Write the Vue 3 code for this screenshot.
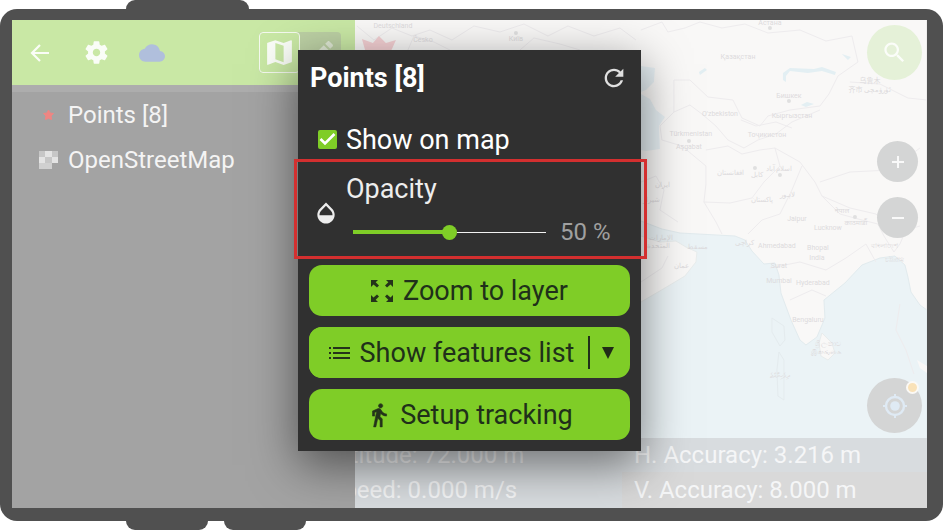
<script setup>
import { ref } from 'vue'

const visible = ref(true)
const opacity = ref(50)
const mode = ref('map')

const layers = [
  { name: 'Points [8]', kind: 'point' },
  { name: 'OpenStreetMap', kind: 'raster' },
]

const readings = [
  { id: 'altitude', text: 'Altitude: 72.000 m' },
  { id: 'h-accuracy', text: 'H. Accuracy: 3.216 m' },
  { id: 'speed', text: 'Speed: 0.000 m/s' },
  { id: 'v-accuracy', text: 'V. Accuracy: 8.000 m' },
]

const borders = [
  'M641 30 662 22 668 32 685 28 700 22 722 28 745 24 768 33 800 30 826 41 852 36 858 62 838 76 829 94 820 106 790 110 768 116 760 126 742 118 733 100 708 97 690 80 674 80 674 112 690 105 702 114 716 126 728 140 744 148 758 140 776 134 792 122 820 110',
  'M674 112 660 126 662 140 682 146 706 166 706 184 704 202 716 222 722 234',
  'M706 150 728 146 742 154 760 150 775 148 800 162 815 182 822 196 850 208 876 214 884 222',
  'M704 202 730 203 752 198 764 182 780 166 775 148',
  'M748 234 762 220 780 214 792 190 802 166',
  'M822 196 840 214 862 220 878 224 884 236 894 252 900 244 906 230 920 226',
  'M820 182 850 172 890 170 920 148',
  'M850 82 880 84 908 98 927 100',
  'M641 182 656 176 664 190 660 210 678 222',
  'M770 268 800 262 826 270 846 258 866 244 876 262',
  'M790 300 812 290 826 296',
  'M641 282 662 268 668 256',
  'M741 120 756 126 776 122 792 128',
  'M900 304 896 330 906 350 914 374',
  'M357 26 374 40 392 28 412 36 430 30 452 40 474 26 500 32 524 24 548 36 568 26 594 36 620 28 636 40',
  'M408 50 414 36 434 42 450 50M520 50 534 38 560 44 580 50',
]

const places = [
  { x: 770, y: 25, t: 'Астана' },
  { x: 738, y: 59, t: 'Қазақстан' },
  { x: 870, y: 83, t: '乌鲁木' },
  { x: 870, y: 92, t: '齐市 ئۈرۈمچى' },
  { x: 789, y: 98, t: 'Бишкек' },
  { x: 720, y: 116, t: "O'zbekiston" },
  { x: 792, y: 118, t: 'Кыргызстан' },
  { x: 691, y: 136, t: 'Türkmenistan' },
  { x: 767, y: 137, t: 'Тоҷикистон' },
  { x: 689, y: 149, t: 'Aşgabat' },
  { x: 731, y: 175, t: 'افغانستان' },
  { x: 757, y: 177, t: 'کابل' },
  { x: 779, y: 171, t: 'اسلام آباد' },
  { x: 663, y: 187, t: 'ایران' },
  { x: 652, y: 202, t: 'شیراز' },
  { x: 788, y: 197, t: 'لاہور' },
  { x: 762, y: 202, t: 'پاکستان' },
  { x: 842, y: 213, t: 'नेपाल' },
  { x: 797, y: 221, t: 'Jaipur' },
  { x: 828, y: 230, t: 'Lucknow' },
  { x: 856, y: 225, t: 'काठमाडौं' },
  { x: 661, y: 240, t: 'الإمارات' },
  { x: 659, y: 248, t: 'المتحدة' },
  { x: 698, y: 249, t: 'مسقط' },
  { x: 745, y: 245, t: 'کراچی' },
  { x: 777, y: 248, t: 'Ahmedabad' },
  { x: 818, y: 250, t: 'Bhopal' },
  { x: 817, y: 260, t: 'India' },
  { x: 885, y: 248, t: 'বাংলাদেশ' },
  { x: 895, y: 262, t: 'চট্টগ্রাম' },
  { x: 682, y: 268, t: 'عمان' },
  { x: 779, y: 268, t: 'Surat' },
  { x: 779, y: 283, t: 'Mumbai' },
  { x: 813, y: 285, t: 'Hyderabad' },
  { x: 808, y: 322, t: 'Bengaluru' },
  { x: 828, y: 346, t: 'ශ්‍රී ලංකාව' },
  { x: 826, y: 354, t: 'இலங்கை' },
  { x: 780, y: 378, t: 'ދިވެހިރާއްޖެ' },
  { x: 393, y: 28, t: 'Deutschland' },
  { x: 423, y: 42, t: 'Česko' },
  { x: 516, y: 41, t: 'Київ' },
]
</script>

<template>
  <div class="device">
    <div class="keys keys-top"><span class="key key-wide"></span></div>

    <div class="frame">
      <div class="screen">
        <aside class="sidebar">
          <header class="toolbar">
            <button class="tool" type="button" aria-label="Back">
              <svg width="24" height="24" viewBox="0 0 24 24"><path d="M21 12H4M12 4 4 12l8 8" fill="none" stroke="#fafdf7" stroke-width="2.200" /></svg>
            </button>
            <button class="tool" type="button" aria-label="Settings">
              <svg width="27" height="27" viewBox="0 0 24 24" fill="#fafdf7"><path d="M19.430 12.980c.04-.32.070-.64.070-.98s-.03-.66-.07-.98l2.110-1.650c.19-.15.24-.42.120-.64l-2-3.460c-.12-.22-.39-.3-.61-.22l-2.490 1c-.52-.4-1.080-.73-1.690-.98l-.38-2.650C14.460 2.180 14.250 2 14 2h-4c-.25 0-.46.180-.49.420l-.38 2.650c-.61.250-1.170.590-1.690.980l-2.490-1c-.23-.09-.49 0-.61.220l-2 3.460c-.13.220-.07.490.120.640l2.110 1.650c-.04.320-.07.650-.07.980s.03.660.07.980l-2.110 1.650c-.19.150-.24.420-.12.640l2 3.460c.12.220.39.300.61.220l2.490-1c.52.400 1.080.730 1.690.980l.38 2.650c.03.240.24.420.49.420h4c.25 0 .46-.18.490-.42l.38-2.650c.61-.25 1.170-.59 1.690-.98l2.490 1c.23.090.49 0 .61-.22l2-3.460c.12-.22.070-.49-.12-.64l-2.110-1.650zM12 15.300c-1.820 0-3.300-1.480-3.300-3.300s1.480-3.300 3.300-3.300 3.300 1.480 3.300 3.300-1.480 3.300-3.300 3.300z" /></svg>
            </button>
            <button class="tool" type="button" aria-label="Cloud">
              <svg width="26" height="26" viewBox="0 0 24 24" fill="#b0bfdc"><path d="M19.350 10.040C18.670 6.590 15.640 4 12 4 9.110 4 6.600 5.640 5.350 8.040 2.340 8.360 0 10.910 0 14c0 3.310 2.690 6 6 6h13c2.760 0 5-2.240 5-5 0-2.640-2.050-4.780-4.650-4.960z" /></svg>
            </button>
            <div class="modes">
              <button class="mode" :class="{ active: mode === 'map' }" type="button" aria-label="Browse mode" @click="mode = 'map'">
                <svg width="33" height="33" viewBox="0 0 24 24" fill="#fafdf7"><path d="M20.500 3l-.16.030L15 5.100 9 3 3.360 4.900c-.21.070-.36.250-.36.480V20.500c0 .28.220.500.500.500l.16-.03L9 18.900l6 2.100 5.640-1.900c.21-.07.360-.25.360-.48V3.500c0-.28-.22-.5-.5-.5zM15 19l-6-2.110V5l6 2.110V19z" /></svg>
              </button>
              <button class="mode" :class="{ active: mode === 'edit' }" type="button" aria-label="Edit mode" @click="mode = 'edit'">
                <svg width="32" height="32" viewBox="0 0 24 24" fill="#dfe8d4"><path d="M3 17.250V21h3.750L17.810 9.940l-3.750-3.750L3 17.250zM20.710 7.040c.39-.39.390-1.020 0-1.410l-2.340-2.340c-.39-.39-1.020-.39-1.410 0l-1.830 1.830 3.750 3.750 1.830-1.830z" /></svg>
              </button>
            </div>
          </header>
          <ul class="layers">
            <li v-for="layer in layers" :key="layer.name" class="layer">
              <svg v-if="layer.kind === 'point'" class="layer-icon" width="20" height="20" viewBox="0 0 20 20"><path d="M10.500 5 12 8l3.500.5-2.500 2.500.6 3.500-3.100-1.200-3.100 1.200.6-3.500L5.500 8.500 9 8z" fill="#ee8683" stroke="#ee8683" stroke-linejoin="round" /></svg>
              <svg v-else class="layer-icon" width="20" height="20" viewBox="0 0 20 20">
                <path d="M1 1h19v12h-6v6H1z" fill="#d0d0d0" />
                <path d="M1 1h6v6H1zM14 1h6v6h-6zM7 7h7v6H7z" fill="#c7c7c7" />
                <path d="M7 1h7v6H7zM1 7h6v6H1zM14 7h6v6h-6z" fill="#e4e4e4" />
              </svg>
              <span>{{ layer.name }}</span>
            </li>
          </ul>
        </aside>

        <main class="map-pane">
          <svg class="map" viewBox="355 20 572 488" preserveAspectRatio="xMidYMid slice" aria-label="Map">
            <rect x="355" y="20" width="572" height="488" fill="#f9f8f7" />
            <path d="M355 200 600 200 641 221 662 229 680 233 735 236 745 240 752 251 764 264 775 263 779 275 781 293 791 320 800 340 806 345 817 337 825 318 824 300 845 283 862 265 880 258 895 256 905 265 908 277 911 292 920 305 927 310V508H355z" fill="#ebf3f6" stroke="#e2ebee" />
            <path d="M600 220 641 236 660 242 676 241 686 247 697 252 696 262 685 276 665 288 641 302 600 330z" fill="#f9f8f7" stroke="#e9eded" />
            <path d="M641 66 655 68 654 82 646 90 641 92zM641 94 650 99 656 110 665 117 659 126 660 149 646 151 641 150z" fill="#e7f0f4" />
            <path d="M783 73 790 68 814 69 822 67 836 72 835 75 822 71 808 73 790 71 786 76 786 82 783 80zM801 105l6-3 7 2-8 3zM842 54l9 3-3 3zM699 72l6-4 2 2-7 5z" fill="#e3eff3" />
            <path d="M822 333 832 343 835 353 828 360 821 356 819 343z" fill="#f9f8f7" stroke="#e8ecec" />
            <path d="M917 360 927 366V373L920 368z" fill="#f9f8f7" />
            <g fill="none" stroke="#eeecee" stroke-linejoin="round">
              <path v-for="(d, i) in borders" :key="i" :d="d" />
              <path d="M772 318 784 326 785 340 780 346 772 332zM779 352 784 360 784 400 778 396 777 370z" stroke="#e4ebee" />
            </g>
            <g fill="#e0e0e0"><circle cx="770" cy="28" r="2" /><circle cx="789" cy="101" r="2" /><circle cx="689" cy="141" r="2" /><circle cx="755" cy="168" r="2" /><circle cx="780" cy="175" r="2" /><circle cx="855" cy="217" r="2" /><circle cx="516" cy="33" r="2" /></g>
            <path d="M362 39 373 43 379 36 386 43 396 40 392 49 386 60H368z" fill="#f4d0d3" />
            <text v-for="p in places" :key="p.t" class="place" :x="p.x" :y="p.y">{{ p.t }}</text>
          </svg>

          <div class="controls">
            <button class="fab search" type="button" aria-label="Search">
              <svg width="27" height="27" viewBox="0 0 24 24" fill="#fbfdf9"><path d="M15.500 14h-.79l-.28-.27C15.410 12.590 16 11.110 16 9.500 16 5.910 13.090 3 9.500 3S3 5.910 3 9.500 5.910 16 9.500 16c1.610 0 3.090-.59 4.230-1.570l.27.280v.79l5 4.990L20.490 19l-4.990-5zm-6 0C7.010 14 5 11.990 5 9.500S7.010 5 9.500 5 14 7.010 14 9.500 11.990 14 9.500 14z" /></svg>
            </button>
            <div class="zoom">
              <button class="fab small" type="button" aria-label="Zoom in">
                <svg width="12" height="12" viewBox="0 0 12 12"><path d="M6 0v12M0 6h12" stroke="#f9f9f9" stroke-width="2" /></svg>
              </button>
              <button class="fab small" type="button" aria-label="Zoom out">
                <svg width="12" height="12" viewBox="0 0 12 12"><path d="M0 6h12" stroke="#f9f9f9" stroke-width="2" /></svg>
              </button>
            </div>
            <button class="fab locate" type="button" aria-label="Locate">
              <svg width="26" height="26" viewBox="0 0 26 26" fill="none" stroke="#dfeaf4"><circle cx="13" cy="13" r="9" stroke-width="2.400" /><circle cx="13" cy="13" r="4.800" fill="#dfeaf4" stroke="none" /><path d="M13 1v4M13 21v4M1 13h4M21 13h4" stroke-width="2" /></svg>
              <span class="badge"></span>
            </button>
          </div>

          <div class="readings">
            <div v-for="r in readings" :key="r.id" class="reading" :class="r.id"><span>{{ r.text }}</span></div>
          </div>
        </main>

        <section class="dialog" role="dialog" aria-labelledby="dialog-title">
          <header class="dialog-head">
            <h1 id="dialog-title">Points [8]</h1>
            <button class="refresh" type="button" aria-label="Refresh">
              <svg width="28" height="28" viewBox="0 0 24 24" fill="#e0e0e0"><path d="M17.650 6.350C16.200 4.900 14.210 4 12 4c-4.420 0-7.990 3.580-7.990 8s3.570 8 7.990 8c3.730 0 6.840-2.550 7.730-6h-2.080c-.82 2.330-3.040 4-5.650 4-3.310 0-6-2.690-6-6s2.690-6 6-6c1.660 0 3.140.690 4.220 1.780L13 11h7V4l-2.350 2.350z" /></svg>
            </button>
          </header>

          <label class="show">
            <span class="tick">
              <input v-model="visible" type="checkbox" />
              <svg v-if="visible" width="19" height="19" viewBox="0 0 19 19"><path d="M2.500 9 7 13.500 16.500 4" fill="none" stroke="#fff" stroke-width="2.600" /></svg>
            </span>
            Show on map
          </label>

          <div class="opacity">
            <svg class="drop" width="26" height="26" viewBox="0 0 24 24" fill="#ededed"><path d="M17.660 8 12 2.350 6.340 8C4.780 9.560 4 11.640 4 13.640s.78 4.110 2.340 5.670 3.610 2.350 5.660 2.350 4.100-.79 5.660-2.350S20 15.640 20 13.640 19.220 9.560 17.660 8zM6 14c.01-2 .62-3.270 1.760-4.400L12 5.270l4.240 4.380C17.380 10.770 17.990 12 18 14H6z" /></svg>
            <label for="opacity">Opacity</label>
            <input id="opacity" v-model="opacity" type="range" min="0" max="100" :style="{ '--fill': opacity + '%' }" />
            <output for="opacity">{{ opacity }} %</output>
          </div>

          <div class="actions">
            <button class="action" type="button">
              <svg width="22" height="22" viewBox="0 0 22 22" fill="#24331a"><path d="M0 0h7L4.700 2.300 8 5.600 6 7.600 2.500 4.500 0 7zM22 0h-7l2.300 2.300L14 5.600l2 2 3.500-3.100L22 7zM0 22h7l-2.300-2.300L8 16.400l-2-2-3.500 3.100L0 15zM22 22h-7l2.300-2.300-3.300-3.300 2-2 3.500 3.100L22 15z" /></svg>
              Zoom to layer
            </button>
            <div class="split">
              <button class="action split-main" type="button">
                <svg width="21" height="13" viewBox="0 0 21 13" fill="#24331a"><path d="M0 1h2v2H0zM4 1h17v2H4zM0 6h2v2H0zM4 6h17v2H4zM0 11h2v2H0zM4 11h17v2H4z" /></svg>
                Show features list
              </button>
              <button class="split-more" type="button" aria-label="More options">
                <svg width="12" height="12" viewBox="0 0 12 12"><path d="M0 0h12L6 12z" fill="#202b17" /></svg>
              </button>
            </div>
            <button class="action walk" type="button">
              <svg width="26" height="26" viewBox="0 0 24 24" fill="#24331a"><path d="M13.500 5.500c1.100 0 2-.9 2-2s-.9-2-2-2-2 .9-2 2 .9 2 2 2zM9.800 8.900 7 23h2.100l1.800-8 2.100 2v6h2v-7.500l-2.100-2 .6-3C14.800 12 16.800 13 19 13v-2c-1.900 0-3.500-1-4.300-2.400l-1-1.600c-.4-.6-1-1-1.700-1-.3 0-.5.100-.8.100L6 8.300V13h2V9.600l1.800-.7" stroke="#24331a" stroke-width="0.500" /></svg>
              Setup tracking
            </button>
          </div>
        </section>
      </div>
    </div>

    <div class="keys keys-bottom"><span class="key"></span><span class="key"></span></div>
  </div>
</template>

<style>
body {
  background: #fff;
}
</style>

<style scoped>
.device {
  box-sizing: border-box;
  display: flex;
  flex-direction: column;
  min-height: 100vh;
  font-family: Roboto, "Noto Sans", "Noto Sans CJK SC", sans-serif;
}
.device * {
  box-sizing: border-box;
}
button {
  margin: 0;
  padding: 0;
  border: 0;
  background: none;
  font: inherit;
  color: inherit;
  cursor: pointer;
}
svg {
  display: block;
  flex: none;
}
.keys {
  display: flex;
  gap: 16px;
  height: 9px;
  padding-left: 126px;
}
.key {
  width: 82px;
  background: #505050;
}
.key-wide {
  width: 123px;
}
.keys-top .key {
  border-radius: 9px 9px 0 0;
}
.keys-bottom .key {
  border-radius: 0 0 9px 9px;
}
.frame {
  flex: 1;
  display: flex;
  padding: 11px 16px 13px 12px;
  border-radius: 17px;
  background: #505050;
}
.screen {
  position: relative;
  flex: 1;
  display: grid;
  grid-template-columns: 3fr 5fr;
  overflow: hidden;
}
.sidebar {
  background: #a3a3a3;
}
.toolbar {
  display: flex;
  align-items: center;
  height: 65px;
  padding-right: 14px;
  background: #c9e8a5;
}
.tool {
  display: grid;
  place-items: center;
  width: 56px;
  height: 56px;
}
.modes {
  display: flex;
  margin-left: auto;
  border-radius: 4px;
  background: #bcd0a4;
}
.mode {
  display: grid;
  place-items: center;
  width: 41px;
  height: 41px;
}
.mode.active {
  border: 1px solid #f5faef;
  border-radius: 4px;
  background: #c9e8a5;
}
.layers {
  margin: 0;
  padding: 0;
  border-top: 7px solid #adadad;
  list-style: none;
}
.layer {
  display: flex;
  align-items: center;
  gap: 10px;
  height: 45px;
  padding-left: 26px;
  color: #f4f4f4;
  font-size: 24px;
}
.map-pane {
  position: relative;
  display: flex;
  flex-direction: column;
  min-width: 0;
  overflow: hidden;
}
.map {
  position: absolute;
  inset: 0;
  width: 100%;
  height: 100%;
}
.place {
  fill: #dddbdd;
  font-size: 7px;
  text-anchor: middle;
}
.controls {
  position: relative;
  flex: 1;
  display: flex;
  flex-direction: column;
  align-items: flex-end;
  padding: 5px;
}
.fab {
  position: relative;
  display: grid;
  place-items: center;
  width: 55px;
  height: 55px;
  border-radius: 50%;
  background: #d4d5d5;
}
.search {
  background: #e5f1d8;
}
.zoom {
  display: grid;
  gap: 15px;
  margin: 61px 4px 0 0;
}
.small {
  width: 41px;
  height: 41px;
}
.locate {
  margin-top: auto;
}
.badge {
  position: absolute;
  top: 3px;
  right: 3px;
  width: 13px;
  height: 13px;
  border: 2px solid #fbf9f5;
  border-radius: 50%;
  background: #f9e2b8;
}
.readings {
  position: relative;
  display: grid;
  grid-template-columns: 7fr 8fr;
  grid-template-rows: 34px 36px;
}
.reading {
  display: flex;
  align-items: center;
  padding-left: 12px;
  background: #d8dcdf;
  color: #f5f6f7;
  font-size: 24px;
  white-space: nowrap;
}
.altitude,
.speed {
  padding-left: 0;
}
.altitude span,
.speed span {
  margin-left: -26px;
}
.v-accuracy {
  background: #d9d9d9;
}
.dialog {
  position: absolute;
  top: 30px;
  left: 31.250%;
  width: 37.500%;
  background: #303030;
  box-shadow: 0 14px 44px rgba(0, 0, 0, 0.5);
  color: #fff;
  font-size: 27px;
}
.dialog-head {
  display: flex;
  align-items: center;
  justify-content: space-between;
  height: 56px;
  padding: 0 13px 0 12px;
}
.dialog-head h1 {
  margin: 0;
  font-size: 27px;
  font-weight: 700;
}
.show {
  display: flex;
  align-items: center;
  gap: 9px;
  height: 53px;
  padding: 14px 0 0 20px;
  line-height: 32px;
}
.tick {
  display: grid;
  width: 19px;
  height: 19px;
}
.tick > * {
  grid-area: 1 / 1;
}
.tick input {
  appearance: none;
  width: 19px;
  height: 19px;
  margin: 0;
  border: 2px solid #7fcd27;
  border-radius: 2px;
}
.tick input:checked {
  background: #7fcd27;
}
.tick svg {
  z-index: 1;
  pointer-events: none;
}
.opacity {
  display: grid;
  grid-template-columns: 26px 1fr 50px;
  grid-template-rows: 50px 36px;
  column-gap: 14px;
  align-items: center;
  height: 100px;
  margin: 0 -6px 0 -4px;
  padding: 2px 34px 6px 16px;
  border: 3px solid #d32f2f;
  color: #ededed;
}
.drop {
  grid-row: 1 / 3;
  align-self: end;
  margin-bottom: 24px;
}
.opacity label {
  grid-column: 2 / 4;
  margin-left: -7px;
}
.opacity input {
  appearance: none;
  width: 100%;
  height: 20px;
  margin: 0;
  background:
    linear-gradient(#7fcd27, #7fcd27) left center / var(--fill) 4px no-repeat,
    linear-gradient(#f2f2f2, #f2f2f2) left center / 100% 1px no-repeat;
}
.opacity input::-webkit-slider-thumb {
  appearance: none;
  width: 15px;
  height: 15px;
  border-radius: 50%;
  background: #7fcd27;
}
.opacity output {
  color: #a0a0a0;
  font-size: 24px;
  white-space: nowrap;
}
.actions {
  display: grid;
  gap: 11px;
  padding: 6px 11px 11px;
  color: #20301a;
}
.action {
  display: flex;
  align-items: center;
  justify-content: center;
  gap: 10px;
  height: 51px;
  border-radius: 13px;
  background: #7fcd27;
  white-space: nowrap;
}
.walk {
  gap: 8px;
}
.split {
  display: flex;
  align-items: center;
  border-radius: 13px;
  background: #7fcd27;
}
.split-main {
  flex: 1;
  padding-left: 6px;
}
.split-more {
  display: grid;
  place-items: center;
  width: 42px;
  height: 33px;
  padding-right: 4px;
  border-left: 2px solid #20301a;
}
</style>
